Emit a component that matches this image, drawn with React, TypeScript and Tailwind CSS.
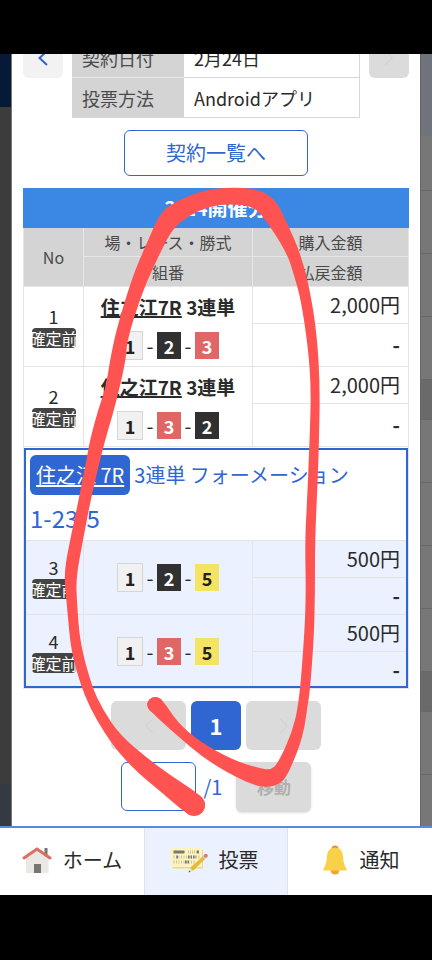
import { useState } from "react";

type Boat = 1 | 2 | 3 | 5;

type Bet = {
  no: number;
  race?: string;
  kind?: string;
  boats: Boat[];
  amount: string;
};

const singleBets: Bet[] = [
  { no: 1, race: "住之江7R", kind: "3連単", boats: [1, 2, 3], amount: "2,000円" },
  { no: 2, race: "住之江7R", kind: "3連単", boats: [1, 3, 2], amount: "2,000円" },
];

const formationBets: Bet[] = [
  { no: 3, boats: [1, 2, 5], amount: "500円" },
  { no: 4, boats: [1, 3, 5], amount: "500円" },
];

const boatColors: Record<Boat, string> = {
  1: "border border-[#d6d6d6] bg-[#f1f1f1] text-[#222] w-[26px] h-[29px]",
  2: "bg-[#313131] text-white w-6 h-[27px]",
  3: "bg-[#e16766] text-white w-6 h-[27px]",
  5: "bg-[#f5e363] text-[#222] w-6 h-[27px]",
};

function Chevron({ left, className }: { left?: boolean; className: string }) {
  return (
    <svg viewBox="0 0 10 16" className={className} fill="none" stroke="currentColor" aria-hidden="true">
      <path d={left ? "M9 1 L1.5 8 L9 15" : "M1 1 L8.5 8 L1 15"} />
    </svg>
  );
}

function Boats({ boats }: { boats: Boat[] }) {
  return (
    <div className="flex h-[29px] items-center justify-center">
      {boats.map((boat, i) => (
        <div key={boat} className="flex items-center">
          {i > 0 && <span className="w-[14px] text-center text-xl leading-6">-</span>}
          <span className={`flex items-center justify-center text-lg font-bold leading-6 ${boatColors[boat]}`}>
            {boat}
          </span>
        </div>
      ))}
    </div>
  );
}

function BetRows({ bet }: { bet: Bet }) {
  const tall = Boolean(bet.race);
  const cell = "border-r border-b border-[#e4e4e4] p-0";
  return (
    <>
      <tr className={tall ? "" : "bg-[#ebf1fe]"}>
        <td rowSpan={2} className={`${cell} border-l text-center`}>
          <div className="flex flex-col items-center gap-px">
            <span className="text-lg leading-[22px]">{bet.no}</span>
            <span className="flex h-5 w-11 justify-center overflow-hidden rounded bg-[#444] text-base leading-5 whitespace-nowrap text-white">
              確定前
            </span>
          </div>
        </td>
        <td rowSpan={2} className={cell}>
          {tall && (
            <p className="mb-[10px] text-center text-[19px] leading-7 font-bold">
              <a href="#race" className="underline decoration-2 underline-offset-1">{bet.race}</a> {bet.kind}
            </p>
          )}
          <Boats boats={bet.boats} />
        </td>
        <td className={`${cell} h-[37px] pr-2 text-right text-xl leading-7`}>{bet.amount}</td>
      </tr>
      <tr className={tall ? "" : "bg-[#ebf1fe]"}>
        <td className={`${cell} ${tall ? "h-[43px]" : "h-[37px]"} pr-2 text-right text-xl leading-7 font-bold`}>-</td>
      </tr>
    </>
  );
}

function BetTable() {
  const head = "border-r border-b border-[#e6e6e6] bg-[#d4d4d4] p-0 text-base leading-6 font-normal text-[#4a4a4a]";
  return (
    <table className="mt-3 w-full table-fixed border-separate border-spacing-0">
      <caption className="h-10 bg-[#3a88e4] text-xl leading-10 font-bold text-white">2/24開催分</caption>
      <colgroup>
        <col className="w-[61px]" />
        <col />
        <col className="w-[156px]" />
      </colgroup>
      <thead>
        <tr>
          <th rowSpan={2} className={`${head} border-l`}>No</th>
          <th className={`${head} h-[29px]`}>場・レース・勝式</th>
          <th className={`${head} h-[29px]`}>購入金額</th>
        </tr>
        <tr>
          <th className={`${head} h-[30px]`}>組番</th>
          <th className={`${head} h-[30px]`}>払戻金額</th>
        </tr>
      </thead>
      <tbody>
        {singleBets.map((bet) => (
          <BetRows key={bet.no} bet={bet} />
        ))}
      </tbody>
      <tbody className="outline-2 -outline-offset-3 outline-[#3066d2]">
        <tr>
          <td colSpan={3} className="border-x border-b border-[#e4e4e4] px-[6px] pt-2 pb-0 text-[#3066d2]">
            <p className="flex items-center text-xl leading-10">
              <a href="#race" className="mr-1 rounded-md bg-[#3066d2] px-[6px] text-white underline underline-offset-2">
                住之江 7R
              </a>
              3連単 フォーメーション
            </p>
            <p className="text-2xl leading-[45px]">1-23-5</p>
          </td>
        </tr>
        {formationBets.map((bet) => (
          <BetRows key={bet.no} bet={bet} />
        ))}
      </tbody>
    </table>
  );
}

function Pager() {
  const [page, setPage] = useState("");
  const arrow = "flex h-[49px] w-[75px] items-center justify-center rounded-md bg-[#dbdbdb] text-[#d0d0d0]";
  return (
    <div className="mt-3 flex flex-col items-center gap-3">
      <div className="flex gap-[5px]">
        <button type="button" disabled aria-label="前へ" className={arrow}>
          <Chevron left className="h-4 w-[10px]" />
        </button>
        <button type="button" className="h-[49px] w-[50px] rounded-md bg-[#3066d2] text-[22px] font-bold text-white">
          1
        </button>
        <button type="button" disabled aria-label="次へ" className={arrow}>
          <Chevron className="h-4 w-[10px]" />
        </button>
      </div>
      <div className="flex items-start">
        <input
          type="text"
          aria-label="ページ"
          value={page}
          onChange={(e) => setPage(e.target.value)}
          className="h-[49px] w-[75px] rounded-md border border-[#3066d2] px-2 text-xl"
        />
        <span className="ml-2 text-xl leading-[49px] text-[#3066d2]">/1</span>
        <button
          type="button"
          disabled
          className="ml-[14px] h-[50px] w-[75px] rounded-md bg-[#dbdbdb] text-[17px] font-bold text-[#b0b0b0] shadow-sm"
        >
          移動
        </button>
      </div>
    </div>
  );
}

function HomeIcon() {
  return (
    <svg viewBox="0 0 30 28" className="h-7 w-[30px]" aria-hidden="true">
      <path d="M22.500 2h3v8l-3-3z" fill="#757575" />
      <path d="M4 12 L15 4 L26.500 12 V27 H4z" fill="#ebe8e3" />
      <rect x="12" y="18" width="7" height="9" fill="#757575" />
      <path d="M2 12 L15 3 L28 12" fill="none" stroke="#de6e61" strokeWidth="3" strokeLinecap="round" />
    </svg>
  );
}

function VoteIcon() {
  return (
    <svg viewBox="0 0 38 26" className="h-[26px] w-[38px]" aria-hidden="true">
      <path d="M2 3h31v18.500H2.500z" fill="#ead88b" />
      <path d="M0.500 1h31.500v19H1.500z" fill="#fcf3bf" />
      <path d="M3.500 5h11" stroke="#777" strokeWidth="3" />
      <path d="M18 5h10" stroke="#c8c3a4" strokeWidth="3" strokeDasharray="1 1" />
      <path d="M27 5h2" stroke="#777" strokeWidth="3" />
      <path d="M3.500 10h26M3.500 15h22" stroke="#c8c3a4" strokeWidth="3" strokeDasharray="1 1.5" />
      <path d="M6.500 10h1.500M18 10h8M15 15h5" stroke="#777" strokeWidth="3" strokeDasharray="1.500 1" />
      <path d="M20 21 L32.500 9.500 L35 12 L23 24z" fill="#e5ba3c" />
      <path d="M20 21 L23 24 L18.500 25.500z" fill="#f3dfae" />
      <path d="M19.200 23.500 L20.500 24.800 L18.500 25.500z" fill="#555" />
      <path d="M32.500 9.500 L34 8 L36.500 10.500 L35 12z" fill="#ccc" />
      <circle cx="35.800" cy="8.800" r="2" fill="#e07a70" />
    </svg>
  );
}

function BellIcon() {
  return (
    <svg viewBox="-2 0 28 30" className="h-[30px] w-7" aria-hidden="true">
      <circle cx="12" cy="4" r="3.500" fill="#e58a36" />
      <circle cx="12" cy="25" r="4.500" fill="#f5a23d" />
      <path d="M12 2.500 C17 2.500 19.500 6 20 11 C20.500 17 21 20 23.500 23.500 C24 25 23.500 25.500 22.500 25.500 H1.500 C0.500 25.500 0 25 0.500 23.500 C3 20 3.500 17 4 11 C4.500 6 7 2.500 12 2.500z" fill="#f9d149" />
    </svg>
  );
}

// outline of the hand-drawn marker loop, clockwise from its lower end
const markerPoints = [
  [194, 816], [186, 813], [175, 804], [160, 791], [138, 773], [118, 752], [104, 732], [90, 708], [80, 683], [73, 657],
  [70, 640], [67, 607], [64, 575], [68, 550], [78, 503], [87, 457], [90, 440], [98, 410], [106, 387], [110, 360],
  [117, 327], [133, 275], [146, 245], [160, 213], [173, 203], [200, 191], [230, 187], [258, 189], [276, 200],
  [287, 223], [300, 252], [310, 290], [317, 335], [320, 387], [319, 440], [318, 473], [315, 540], [315, 590],
  [314, 637], [310, 690], [308, 703], [303, 737], [290, 770], [282, 783], [267, 788], [247, 783], [207, 761],
  [173, 732], [149, 710], [146, 703], [153, 696], [163, 700], [177, 722], [200, 742], [233, 760], [258, 768],
  [271, 770], [278, 763], [292, 733], [299, 703], [304, 640], [306, 597], [305, 540], [307, 503], [310, 430],
  [311, 387], [308, 347], [301, 300], [294, 275], [287, 253], [264, 217], [252, 206], [230, 204], [210, 206],
  [190, 215], [173, 228], [160, 253], [143, 290], [127, 340], [126, 360], [115, 407], [105, 440], [92, 493],
  [83, 540], [76, 578], [77, 603], [80, 643], [92, 687], [103, 710], [120, 735], [147, 758], [170, 775],
  [199, 794], [206, 803], [203, 813],
];

function smoothPath(points: number[][]) {
  const mid = (a: number[], b: number[]) => `${(a[0] + b[0]) / 2} ${(a[1] + b[1]) / 2}`;
  const start = mid(points[points.length - 1], points[0]);
  const curves = points.map((p, i) => `Q${p[0]} ${p[1]} ${mid(p, points[(i + 1) % points.length])}`);
  return `M${start} ${curves.join(" ")}Z`;
}

function Marker() {
  return (
    <svg viewBox="0 0 432 960" className="pointer-events-none absolute inset-0 h-full w-full" fill="#ff5352" aria-hidden="true">
      <path d={smoothPath(markerPoints)} />
      <circle cx="155.500" cy="705" r="8" />
      <circle cx="194" cy="805" r="11" />
    </svg>
  );
}

const backdropLines = [
  "h-[55px]",
  "h-[63px]",
  "h-[63px]",
  "h-[63px]",
  "h-10 bg-black/10",
  "h-[63px]",
  "h-[63px]",
  "h-[63px]",
  "h-[63px]",
  "h-10 bg-black/10",
  "h-[63px]",
];

export default function App() {
  return (
    <div className="relative flex min-h-screen flex-col bg-black font-['Noto_Sans_CJK_JP',sans-serif] text-[#2a2a2a]">
      <div className="h-[54px]" />

      <main className="flex flex-1 overflow-hidden">
        <div className="flex w-3 flex-col border-r border-[#777] bg-[#3c3c3c]">
          <div className="h-[53px] bg-[#061a38]" />
          <div className="mt-auto h-[42px] bg-[#343a42]" />
        </div>

        <section className="min-w-0 flex-1 bg-white px-[11px] pb-3">
          <div className="-mt-4 flex items-start justify-between">
            <button type="button" aria-label="前の契約" className="flex h-10 w-10 items-center justify-center rounded-md bg-[#f2f2f2] text-[#3066d2]">
              <Chevron left className="h-4 w-[10px] stroke-2" />
            </button>
            <table className="w-72 border-separate border-spacing-0 text-lg leading-7">
              <tbody>
                <tr>
                  <th className="h-10 w-28 border-b border-[#e8e8e8] bg-[#d4d4d4] p-0 pl-[10px] text-left font-normal text-[#4a4a4a]">契約日付</th>
                  <td className="border-r border-b border-[#d8d8d8] p-0 pl-[10px]">2月24日</td>
                </tr>
                <tr>
                  <th className="h-10 border-b border-[#d4d4d4] bg-[#d4d4d4] p-0 pl-[10px] text-left font-normal text-[#4a4a4a]">投票方法</th>
                  <td className="border-r border-b border-[#d8d8d8] p-0 pl-[10px]">Androidアプリ</td>
                </tr>
              </tbody>
            </table>
            <button type="button" disabled aria-label="次の契約" className="flex h-10 w-10 items-center justify-center rounded-md bg-[#dbdbdb] text-[#cecece]">
              <Chevron className="h-4 w-[10px]" />
            </button>
          </div>

          <div className="mt-3 flex justify-center">
            <button type="button" className="h-[46px] w-46 rounded-md border border-[#3066d2] text-xl text-[#3066d2]">
              契約一覧へ
            </button>
          </div>

          <BetTable />
          <Pager />
        </section>

        <div className="flex w-3 flex-col border-l border-[#666] bg-[#777]">
          <div className="h-[82px] bg-[#6e737c]" />
          {backdropLines.map((line, i) => (
            <div key={i} className={`border-b border-[#686868] ${line}`} />
          ))}
        </div>
      </main>

      <nav className="grid h-[69px] grid-cols-3 border-t-2 border-[#5a88dc] bg-white text-xl">
        <a href="#home" className="flex items-center justify-center gap-[11px] pb-[3px]">
          <HomeIcon />
          ホーム
        </a>
        <a href="#vote" className="flex items-center justify-center gap-[11px] border-x border-[#dfe3ea] bg-[#ebf1fe] pr-1 pb-[3px]">
          <VoteIcon />
          投票
        </a>
        <a href="#notice" className="flex items-center justify-center gap-[11px] pb-[3px]">
          <BellIcon />
          通知
        </a>
      </nav>
      <div className="h-[65px]" />

      <Marker />
    </div>
  );
}
